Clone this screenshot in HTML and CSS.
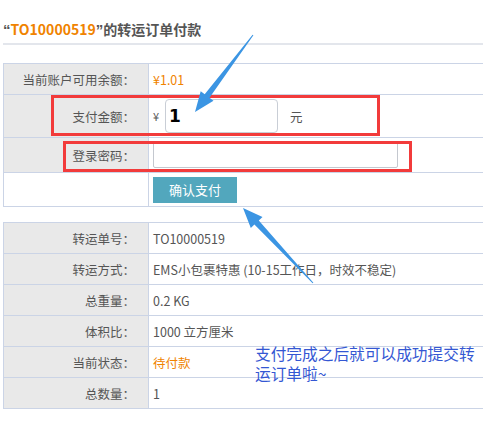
FILE: index.html
```html
<!DOCTYPE html>
<html lang="zh-CN">
<head>
    <meta charset="UTF-8">
    <meta name="viewport" content="width=device-width, initial-scale=1.0">
    <title>转运订单付款</title>
    <link rel="stylesheet" href="styles.css">
</head>
<body>

<div class="page">
    <h2 class="title"><span class="q">“</span><span class="orange">TO10000519</span><span class="q">”</span>的转运订单付款</h2>

    <table class="info pay">
        <tr class="r1">
            <th>当前账户可用余额：</th>
            <td><span class="orange">¥1.01</span></td>
        </tr>
        <tr class="r2">
            <th>支付金额：</th>
            <td>
                <div class="amount">
                    <span class="yen">¥</span>
                    <input class="input-money" type="text" value="1">
                    <span class="unit">元</span>
                </div>
            </td>
        </tr>
        <tr class="r3">
            <th>登录密码：</th>
            <td><input class="input-pwd" type="password"></td>
        </tr>
        <tr class="r4">
            <td class="blank"></td>
            <td><button class="pay-btn">确认支付</button></td>
        </tr>
    </table>

    <table class="info detail">
        <tr><th>转运单号：</th><td>TO10000519</td></tr>
        <tr><th>转运方式：</th><td>EMS小包裹特惠 (10-15工作日，时效不稳定)</td></tr>
        <tr><th>总重量：</th><td>0.2 KG</td></tr>
        <tr><th>体积比：</th><td>1000 立方厘米</td></tr>
        <tr><th>当前状态：</th><td><span class="orange">待付款</span></td></tr>
        <tr><th>总数量：</th><td>1</td></tr>
    </table>

    <!-- пометки поверх скриншота -->
    <div class="mark mark-1"></div>
    <div class="mark mark-2"></div>
    <p class="note">支付完成之后就可以成功提交转<br>运订单啦~</p>

    <svg class="arrows" width="483" height="436" viewBox="0 0 483 436">
        <polygon fill="#3b95e3" points="253.4,35.3 209.5,97.8 213.5,100.8 195,112 200.7,91.2 204.7,94.2 252.6,34.7"/>
        <polygon fill="#3b95e3" points="313.4,282.7 258.8,220.6 262.5,217.1 243,208 250.8,228.1 254.4,224.6 312.6,283.3"/>
    </svg>
</div>

</body>
</html>
```

FILE: styles.css
```css
* {
    margin: 0;
    padding: 0;
    box-sizing: border-box;
}
body {
    font-family: "Noto Sans CJK SC", "DejaVu Sans", sans-serif;
    font-size: 12.5px;
    color: #555;
    background-color: #fff;
}
.page {
    position: relative;
    width: 483px;
    height: 436px;
    overflow: hidden;
    padding-left: 3px;
}
.orange {
    color: #f08300;
}
.title {
    width: 500px;
    margin-top: 19px;
    font-size: 14px;
    line-height: 20px;
    font-weight: bold;
    color: #555;
    padding-bottom: 3px;
    border-bottom: 2px solid #e3e6ec;
}
.title .q {
    font-family: "Liberation Sans", sans-serif;
    font-size: 15px;
}
.info {
    width: 520px;
    border-collapse: collapse;
    table-layout: fixed;
}
.pay {
    margin-top: 18px;
}
.detail {
    margin-top: 15px;
}
th, td {
    border: 1px solid #cbd4e6;
    text-align: left;
    font-weight: normal;
    padding: 0 0 0 4px;
}
th {
    width: 145px;
    text-align: right;
    padding: 0 13px 0 0;
    background-color: #e9e9e9;
    color: #555;
}
td.blank {
    background-color: #fff;
}
.r1 { height: 31px; }
.r2 { height: 43px; }
.r3 { height: 35px; }
.r4 { height: 34px; }
.detail tr { height: 31px; }
.detail td { color: #555; }
.amount {
    display: flex;
    align-items: center;
}
.yen {
    width: 12px;
    font-size: 11px;
}
.input-money {
    width: 113px;
    height: 34px;
    border: 1px solid #c9ced6;
    border-radius: 4px;
    padding-left: 3px;
    font-family: "DejaVu Sans", sans-serif;
    font-size: 17px;
    font-weight: bold;
    color: #000;
}
.unit {
    margin-left: 12px;
}
.input-pwd {
    display: block;
    width: 245px;
    height: 26px;
    border: 1px solid #c4c8cf;
    border-radius: 2px;
}
.pay-btn {
    display: block;
    width: 84px;
    height: 26px;
    border: none;
    background-color: #52a7bd;
    color: #fff;
    font-family: inherit;
    font-size: 13px;
}
.mark {
    position: absolute;
    border: 3px solid #f23b3b;
}
.mark-1 {
    left: 51px;
    top: 95px;
    width: 329px;
    height: 41px;
}
.mark-2 {
    left: 63px;
    top: 141px;
    width: 349px;
    height: 31px;
}
.note {
    position: absolute;
    left: 255px;
    top: 344px;
    font-size: 15.7px;
    line-height: 20px;
    color: #3457d3;
}
.arrows {
    position: absolute;
    left: 0;
    top: 0;
}
```
